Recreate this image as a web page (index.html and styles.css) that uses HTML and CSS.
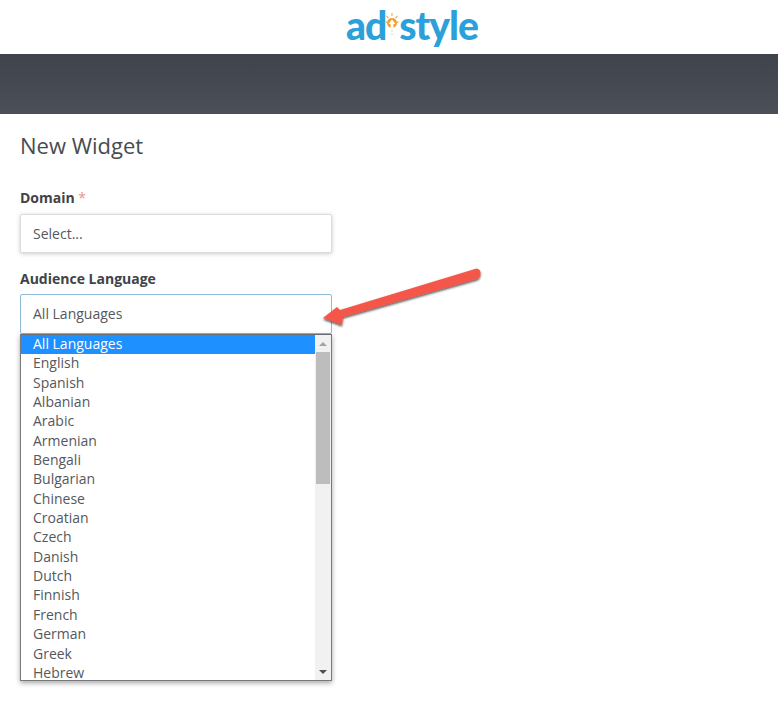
FILE: index.html
```html
<!DOCTYPE html>
<html lang="en">
<head>
<meta charset="utf-8">
<title>New Widget</title>
<link rel="stylesheet" href="styles.css">
</head>
<body>
<header class="top">
  <div class="logo">
    <span>ad</span>
    <svg class="bulb" width="14" height="30" viewBox="0 0 14 30" aria-hidden="true">
      <circle cx="7" cy="14" r="5" fill="#f0a033"/>
      <path d="M7 10.500 L10.500 15 H8.400 V20 H5.600 V15 H3.500 Z" fill="#fff"/>
      <path d="M7 4v3M1.500 7l2 2.200M12.500 7l-2 2.200M.5 13h2M11.500 13h2" stroke="#f3b468" stroke-width="1.300" fill="none"/>
      <path d="M7 21v1.500M7 24.500v1.500" stroke="#f6d3a6" stroke-width="1.400"/>
    </svg>
    <span>style</span>
  </div>
</header>
<div class="band"></div>
<main class="content">
  <h1 class="title">New Widget</h1>
  <div class="field">
    <label class="label">Domain <span class="req">*</span></label>
    <div class="select">Select...</div>
  </div>
  <div class="field field-lang">
    <label class="label label-tight">Audience Language</label>
    <div class="select select-open">All Languages</div>
    <div class="dropdown">
      <ul class="options">
        <li class="option option-active">All Languages</li>
        <li class="option">English</li>
        <li class="option">Spanish</li>
        <li class="option">Albanian</li>
        <li class="option">Arabic</li>
        <li class="option">Armenian</li>
        <li class="option">Bengali</li>
        <li class="option">Bulgarian</li>
        <li class="option">Chinese</li>
        <li class="option">Croatian</li>
        <li class="option">Czech</li>
        <li class="option">Danish</li>
        <li class="option">Dutch</li>
        <li class="option">Finnish</li>
        <li class="option">French</li>
        <li class="option">German</li>
        <li class="option">Greek</li>
        <li class="option">Hebrew</li>
      </ul>
      <div class="scrollbar">
        <div class="scroll-btn"><span class="tri tri-up"></span></div>
        <div class="scroll-track"><div class="scroll-thumb"></div></div>
        <div class="scroll-btn"><span class="tri tri-down"></span></div>
      </div>
    </div>
  </div>
</main>
<svg class="arrow" width="170" height="72" viewBox="0 0 170 72" aria-hidden="true">
  <defs>
    <filter id="arrow-shadow" x="-10%" y="-20%" width="120%" height="150%">
      <feDropShadow dx="0" dy="1.500" stdDeviation="1.300" flood-color="#000" flood-opacity=".7"/>
    </filter>
  </defs>
  <path d="M3 54 L17 43 L20 46 L155 5 C159 4 161 7 160.500 10 C160 13 159 14 157 15 L23 53 L22 61 Z" fill="#f4574a" filter="url(#arrow-shadow)"/>
</svg>
</body>
</html>
```
FILE: styles.css
```css
* { box-sizing: border-box; }
html, body { margin: 0; padding: 0; height: 719px; overflow: hidden; }
body {
  position: relative;
  background: #fff;
  font-family: "Open Sans", "Liberation Sans", sans-serif;
  color: #4b4e52;
}
.top {
  height: 54px;
  display: flex;
  justify-content: center;
  align-items: flex-start;
}
.logo {
  display: flex;
  align-items: flex-start;
  height: 54px;
  margin-left: 46px;
  padding-top: 2px;
  font-family: "Lato", sans-serif;
  font-weight: 900;
  font-size: 39px;
  line-height: 46px;
  letter-spacing: -1px;
  color: #2ba0da;
}
.bulb { margin: 7px 0 0 -1px; flex: none; }
.band {
  height: 60px;
  background: linear-gradient(#3f444c, #4a4f58);
}
.content { padding: 17px 0 0 20px; width: 332px; }
.title {
  margin: 0;
  font-size: 22px;
  font-weight: 400;
  line-height: 28px;
  color: #484b4f;
}
.field { margin-top: 29px; }
.field-lang { margin-top: 16px; position: relative; }
.label {
  display: block;
  font-size: 14px;
  font-weight: 700;
  line-height: 20px;
  color: #414347;
  margin-bottom: 6px;
}
.label-tight { margin-bottom: 5px; }
.req { color: #ec8f8f; font-weight: 400; }
.select {
  height: 39px;
  width: 312px;
  padding: 0 12px;
  display: flex;
  align-items: center;
  background: #fff;
  border: 1px solid #dcdcdc;
  border-radius: 2px;
  box-shadow: 0 1px 4px rgba(0, 0, 0, .2);
  font-size: 14px;
  color: #55585c;
}
.select-open {
  height: 40px;
  padding-bottom: 2px;
  border-color: #8dbad6;
  box-shadow: none;
}
.dropdown {
  position: absolute;
  left: 0;
  top: 65px;
  width: 312px;
  height: 347px;
  display: flex;
  background: #fff;
  border: 1px solid #77797c;
  border-top-color: #6a6c70;
  box-shadow: 0 2px 5px rgba(0, 0, 0, .35);
  overflow: hidden;
}
.options {
  flex: 1;
  min-width: 0;
  margin: 0;
  padding: 0;
  list-style: none;
  font-size: 14px;
}
.option {
  height: 19.350px;
  line-height: 18px;
  padding-left: 12px;
  color: #55585c;
  white-space: nowrap;
}
.option-active { background: #1e90ff; color: #fff; }
.scrollbar {
  width: 16px;
  flex: none;
  display: flex;
  flex-direction: column;
  background: #f1f1f1;
}
.scroll-btn {
  height: 17px;
  flex: none;
  display: flex;
  align-items: center;
  justify-content: center;
}
.scroll-track { flex: 1; }
.scroll-thumb { height: 132px; background: #bdbdbd; margin: 0 1px; }
.tri { width: 0; height: 0; border-left: 4px solid transparent; border-right: 4px solid transparent; }
.tri-up { border-bottom: 4px solid #a3a3a3; }
.tri-down { border-top: 4px solid #505050; }
.arrow { position: absolute; left: 320px; top: 264px; }
```
